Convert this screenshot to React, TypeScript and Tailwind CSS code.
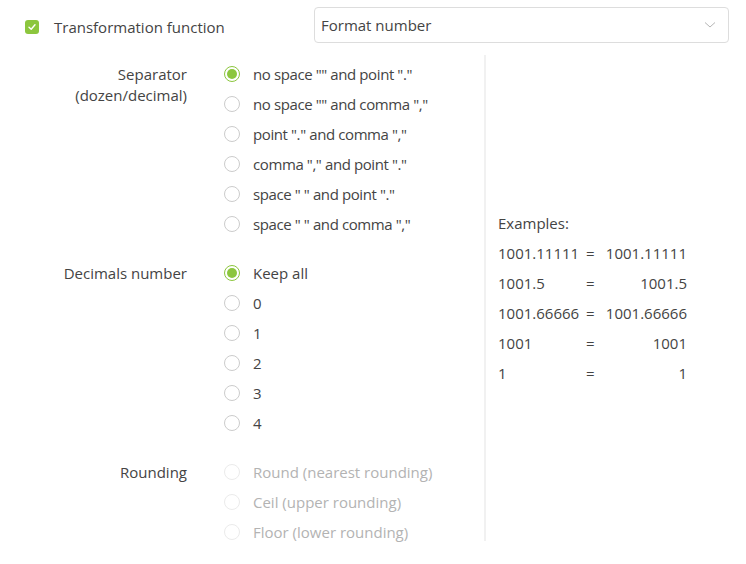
import React from 'react';

const separators = [
  'no space "" and point "."',
  'no space "" and comma ","',
  'point "." and comma ","',
  'comma "," and point "."',
  'space " " and point "."',
  'space " " and comma ","',
];

const decimals = ['Keep all', '0', '1', '2', '3', '4'];

const roundings = ['Round (nearest rounding)', 'Ceil (upper rounding)', 'Floor (lower rounding)'];

const examples: [string, string][] = [
  ['1001.11111', '1001.11111'],
  ['1001.5', '1001.5'],
  ['1001.66666', '1001.66666'],
  ['1001', '1001'],
  ['1', '1'],
];

const Radio: React.FC<{ label: string; checked?: boolean; disabled?: boolean; tight?: boolean }> = ({
  label,
  checked,
  disabled,
  tight,
}) => (
  <div className="flex items-center h-[30px]">
    <div
      className={
        'w-4 h-4 rounded-full border flex items-center justify-center shrink-0 ' +
        (checked ? 'border-[#8cc63e]' : disabled ? 'border-[#ebebeb]' : 'border-[#cccccc]')
      }
    >
      {checked && <div className="w-[10px] h-[10px] rounded-full bg-[#8cc63e]" />}
    </div>
    <span
      className={
        'ml-[13px] whitespace-pre ' +
        (tight ? 'tracking-[-0.4px] ' : '') +
        (disabled ? 'text-[#b3b3b3]' : 'text-[#444]')
      }
    >
      {label}
    </span>
  </div>
);

const Section: React.FC<{
  title: React.ReactNode;
  items: string[];
  checked?: number;
  disabled?: boolean;
  tight?: boolean;
  last?: boolean;
}> = ({ title, items, checked, disabled, tight, last }) => (
  <div className={'flex ' + (last ? '' : 'mb-[19px]')}>
    <div className="w-[187px] text-right leading-[21px] pt-[5px] text-[#444]">{title}</div>
    <div className="ml-[37px] flex flex-col">
      {items.map((it, i) => (
        <Radio key={it} label={it} checked={i === checked} disabled={disabled} tight={tight} />
      ))}
    </div>
  </div>
);

export default function App() {
  return (
    <div className="w-[746px] h-[564px] bg-white text-[15px] text-[#444] font-['Open_Sans',sans-serif]">
      {/* header row */}
      <div className="flex items-start pt-[7px]">
        <div className="w-[314px] h-[36px] pl-[25px] flex items-center mt-[2px]">
          <div className="w-[14px] h-[14px] rounded-[3px] bg-[#8cc63e] flex items-center justify-center">
            <svg width="10" height="10" viewBox="0 0 10 10" fill="none">
              <polyline points="2,5.2 4.2,7.2 8,2.8" stroke="white" strokeWidth="1.4" strokeLinecap="round" strokeLinejoin="round" />
            </svg>
          </div>
          <span className="ml-[15px] text-[#444]">Transformation function</span>
        </div>
        <div className="w-[415px] h-[36px] border border-[#dddddd] rounded-[4px] flex items-center justify-between pl-[6px] pr-[12px]">
          <span className="text-[#444]">Format number</span>
          <svg width="12" height="8" viewBox="0 0 12 8" fill="none" className="-mt-[1px]">
            <polyline points="1,1.5 6,6 11,1.5" stroke="#b5b5b5" strokeWidth="1" />
          </svg>
        </div>
      </div>

      {/* main */}
      <div className="flex mt-[10px]">
        <div className="w-[484px] pt-[4px]">
          <Section title={<>Separator<br />(dozen/decimal)</>} items={separators} checked={0} tight />
          <Section title="Decimals number" items={decimals} checked={0} />
          <Section title="Rounding" items={roundings} disabled last />
        </div>
        <div className="w-[2px] bg-[#f1f1f1] mb-[6px]" />
        <div className="pl-[12px] pt-[153px]">
          <div className="h-[30px] flex items-center">Examples:</div>
          <div className="grid grid-cols-[88px_10px_91px]">
            {examples.map(([a, b]) => (
              <React.Fragment key={a}>
                <div className="h-[30px] flex items-center">{a}</div>
                <div className="h-[30px] flex items-center">=</div>
                <div className="h-[30px] flex items-center justify-end">{b}</div>
              </React.Fragment>
            ))}
          </div>
        </div>
      </div>
    </div>
  );
}
